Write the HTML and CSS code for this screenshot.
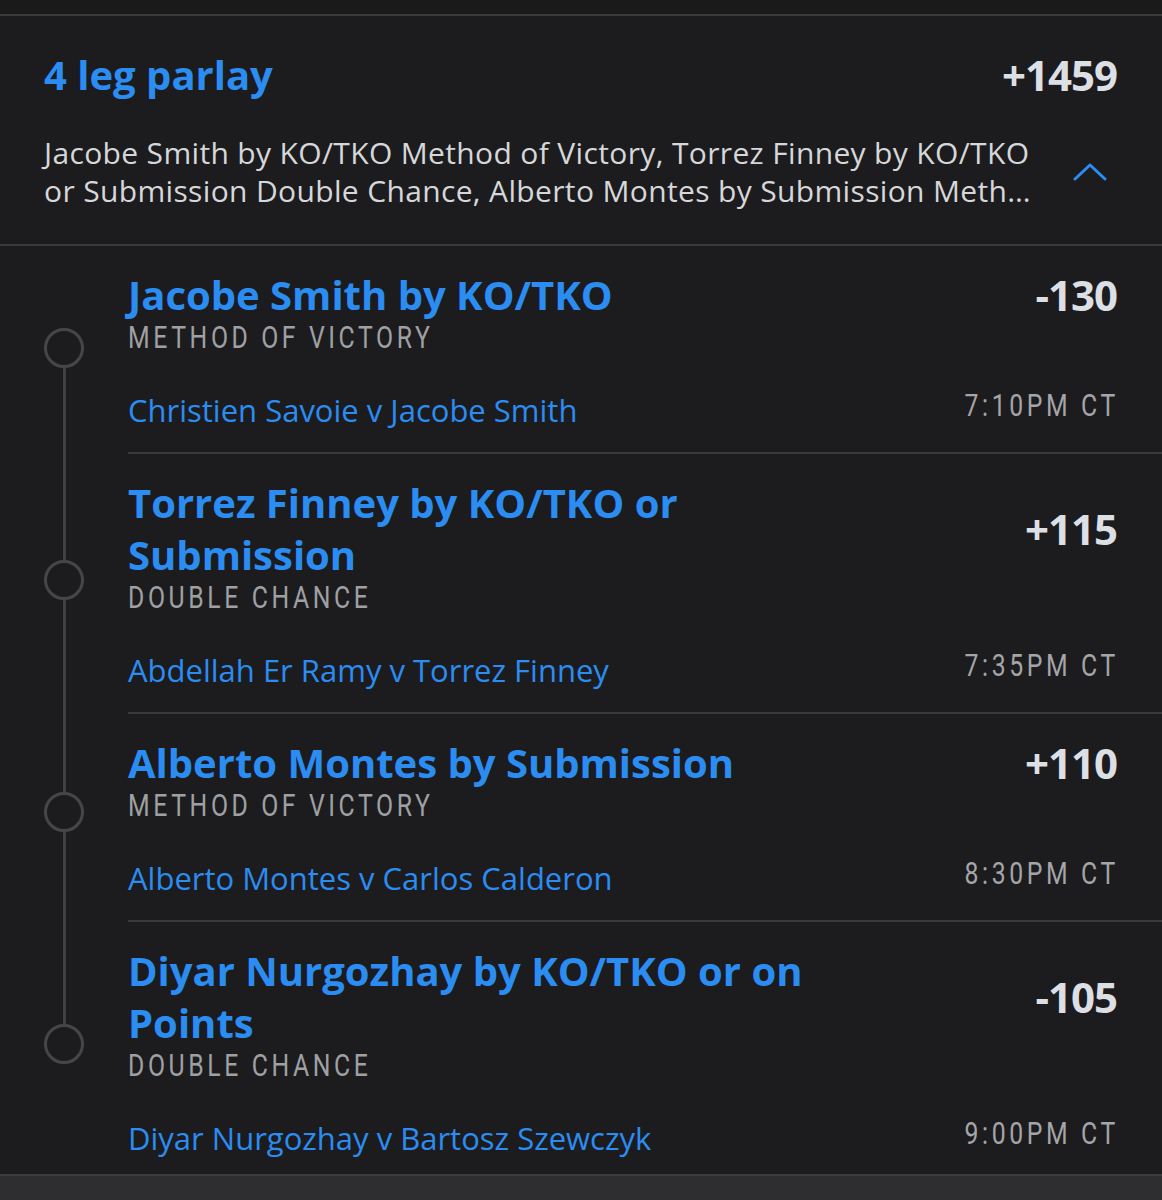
FILE: index.html
```html
<!DOCTYPE html>
<html>
<head>
<meta charset="utf-8">
<link rel="stylesheet" href="styles.css">
</head>
<body>
<div class="topbar"></div>
<section class="header">
  <div class="header-row">
    <h1 class="parlay-title">4 leg parlay</h1>
    <div class="odds odds-big">+1459</div>
  </div>
  <div class="desc-row">
    <p class="desc"><span class="desc-line">Jacobe Smith by KO/TKO Method of Victory, Torrez Finney by KO/TKO</span><span class="desc-line clip">or Submission Double Chance, Alberto Montes by Submission Method of Victory, Diyar Nurgozhay by KO/TKO or on Points Double Chance</span></p>
    <svg class="chevron" width="34" height="20" viewBox="0 0 34 20"><polyline points="2,17 17,3 32,17" fill="none" stroke="#2b8cf2" stroke-width="3" stroke-linecap="round" stroke-linejoin="round"/></svg>
  </div>
</section>
<section class="legs">
  <div class="timeline">
    <span class="dot"></span><span class="seg"></span>
    <span class="dot"></span><span class="seg"></span>
    <span class="dot"></span><span class="seg"></span>
    <span class="dot"></span>
  </div>
  <div class="leg-list">
    <div class="leg">
      <div class="leg-head">
        <div class="leg-title">Jacobe Smith by KO/TKO</div>
        <div class="odds">-130</div>
      </div>
      <div class="market"><span class="narrow">METHOD OF VICTORY</span></div>
      <div class="event-row">
        <div class="event">Christien Savoie v Jacobe Smith</div>
        <div class="time"><span class="narrow">7:10PM CT</span></div>
      </div>
    </div>
    <div class="leg">
      <div class="leg-head">
        <div class="leg-title">Torrez Finney by KO/TKO or<br>Submission</div>
        <div class="odds">+115</div>
      </div>
      <div class="market"><span class="narrow">DOUBLE CHANCE</span></div>
      <div class="event-row">
        <div class="event">Abdellah Er Ramy v Torrez Finney</div>
        <div class="time"><span class="narrow">7:35PM CT</span></div>
      </div>
    </div>
    <div class="leg">
      <div class="leg-head">
        <div class="leg-title">Alberto Montes by Submission</div>
        <div class="odds">+110</div>
      </div>
      <div class="market"><span class="narrow">METHOD OF VICTORY</span></div>
      <div class="event-row">
        <div class="event">Alberto Montes v Carlos Calderon</div>
        <div class="time"><span class="narrow">8:30PM CT</span></div>
      </div>
    </div>
    <div class="leg">
      <div class="leg-head">
        <div class="leg-title">Diyar Nurgozhay by KO/TKO or on<br>Points</div>
        <div class="odds">-105</div>
      </div>
      <div class="market"><span class="narrow">DOUBLE CHANCE</span></div>
      <div class="event-row">
        <div class="event">Diyar Nurgozhay v Bartosz Szewczyk</div>
        <div class="time"><span class="narrow">9:00PM CT</span></div>
      </div>
    </div>
  </div>
</section>
<div class="footer"></div>
</body>
</html>
```

FILE: styles.css
```css
* { box-sizing: border-box; }
html, body {
  margin: 0;
  padding: 0;
  background: #1c1c1e;
  font-family: "Open Sans", "Lato", sans-serif;
  color: #d8dadd;
}
body { width: 1162px; overflow: hidden; }

.topbar {
  height: 16px;
  background: #1a1a1b;
  border-bottom: 2px solid #3a3a3c;
}

.header {
  padding: 33px 45px 34px 44px;
  border-bottom: 2px solid #3a3a3c;
}
.header-row {
  display: flex;
  justify-content: space-between;
  align-items: center;
  height: 52px;
}
.parlay-title {
  margin: 0;
  font-size: 40px;
  font-weight: 700;
  color: #2b8cf2;
  line-height: 52px;
}
.odds {
  font-size: 42px;
  font-weight: 700;
  color: #dcdfe4;
  line-height: 52px;
  letter-spacing: -1px;
  white-space: nowrap;
}
.desc-row {
  display: flex;
  align-items: center;
  justify-content: space-between;
  margin-top: 33px;
}
.desc {
  margin: 0;
  width: 994px;
  font-size: 30px;
  line-height: 38px;
  letter-spacing: 0.35px;
  color: #d6d7da;
}
.desc-line {
  display: block;
  white-space: nowrap;
}
.desc-line.clip {
  overflow: hidden;
  text-overflow: ellipsis;
}
.chevron { margin-right: 10px; flex: none; }

.legs {
  display: grid;
  grid-template-columns: 128px 1fr;
}
.timeline {
  display: flex;
  flex-direction: column;
  align-items: center;
  padding-top: 82px;
}
.dot {
  width: 40px;
  height: 40px;
  border-radius: 50%;
  border: 3px solid #464648;
  flex: none;
}
.seg {
  width: 3px;
  height: 192px;
  background: #404042;
  flex: none;
}

.leg {
  padding: 23px 45px 21px 0;
  border-bottom: 2px solid #3a3a3c;
}
.leg:last-child { border-bottom: none; padding-bottom: 15px; }
.leg-head {
  display: flex;
  justify-content: space-between;
  align-items: center;
}
.leg-title {
  font-size: 40px;
  font-weight: 700;
  line-height: 52px;
  color: #2b8cf2;
}
.narrow {
  display: block;
  width: max-content;
  font-family: "Roboto", "Liberation Sans", sans-serif;
  font-size: 31px;
  line-height: 34px;
  letter-spacing: 4.5px;
  transform: scaleX(0.8);
  white-space: nowrap;
}
.market {
  height: 34px;
  color: #9fa0a3;
}
.market .narrow { transform-origin: left center; }
.event-row {
  display: flex;
  justify-content: space-between;
  align-items: center;
  margin-top: 34px;
}
.event {
  font-size: 31px;
  line-height: 40px;
  color: #2b8cf2;
}
.time {
  color: #a4a5a8;
  padding-bottom: 8px;
  margin-right: -2px;
}
.time .narrow { transform-origin: right center; }

.footer {
  height: 40px;
  background: #2e2e30;
  border-top: 2px solid #3b3b3d;
}
```
